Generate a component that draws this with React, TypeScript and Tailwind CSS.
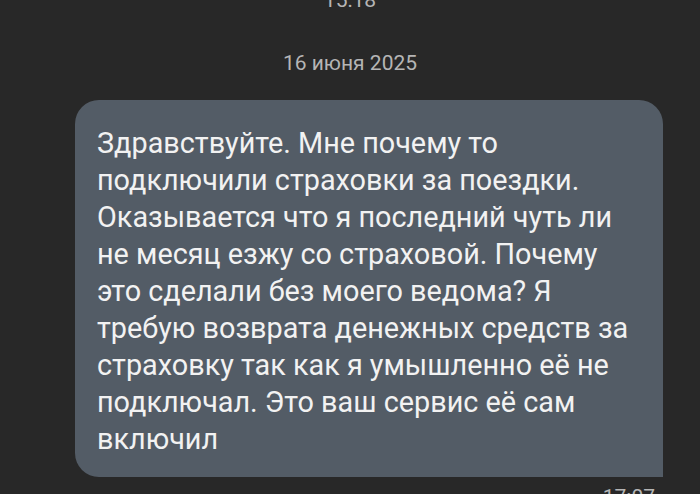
import React from 'react';

const lines = [
  'Здравствуйте. Мне почему то',
  'подключили страховки за поездки.',
  'Оказывается что я последний чуть ли',
  'не месяц езжу со страховой. Почему',
  'это сделали без моего ведома? Я',
  'требую возврата денежных средств за',
  'страховку так как я умышленно её не',
  'подключал. Это ваш сервис её сам',
  'включил',
];

export default function App() {
  return (
    <div
      className="w-[700px] h-[494px] overflow-hidden bg-[#282828] flex flex-col"
      style={{ fontFamily: 'Roboto, "Noto Sans", sans-serif' }}
    >
      <div className="mt-[-12px] text-center text-[21px] leading-[24px] text-[#b5b5b5]">15:18</div>
      <div className="mt-[39px] text-center text-[21px] leading-[24px] text-[#b5b5b5]">16 июня 2025</div>
      <div className="mt-[25px] pl-[75px] pr-[37px]">
        <div className="rounded-[24px] rounded-br-none bg-[#535c66] pl-[22px] pr-[16px] pt-[25px] pb-[19px] text-[28.8px] leading-[37px] text-[#f2f2f2] whitespace-nowrap">
          {lines.map((l, i) => (
            <div key={i}>{l}</div>
          ))}
        </div>
        <div className="mt-[8px] pr-[8px] text-right text-[21px] leading-[24px] text-[#b5b5b5]">17:07</div>
      </div>
    </div>
  );
}
